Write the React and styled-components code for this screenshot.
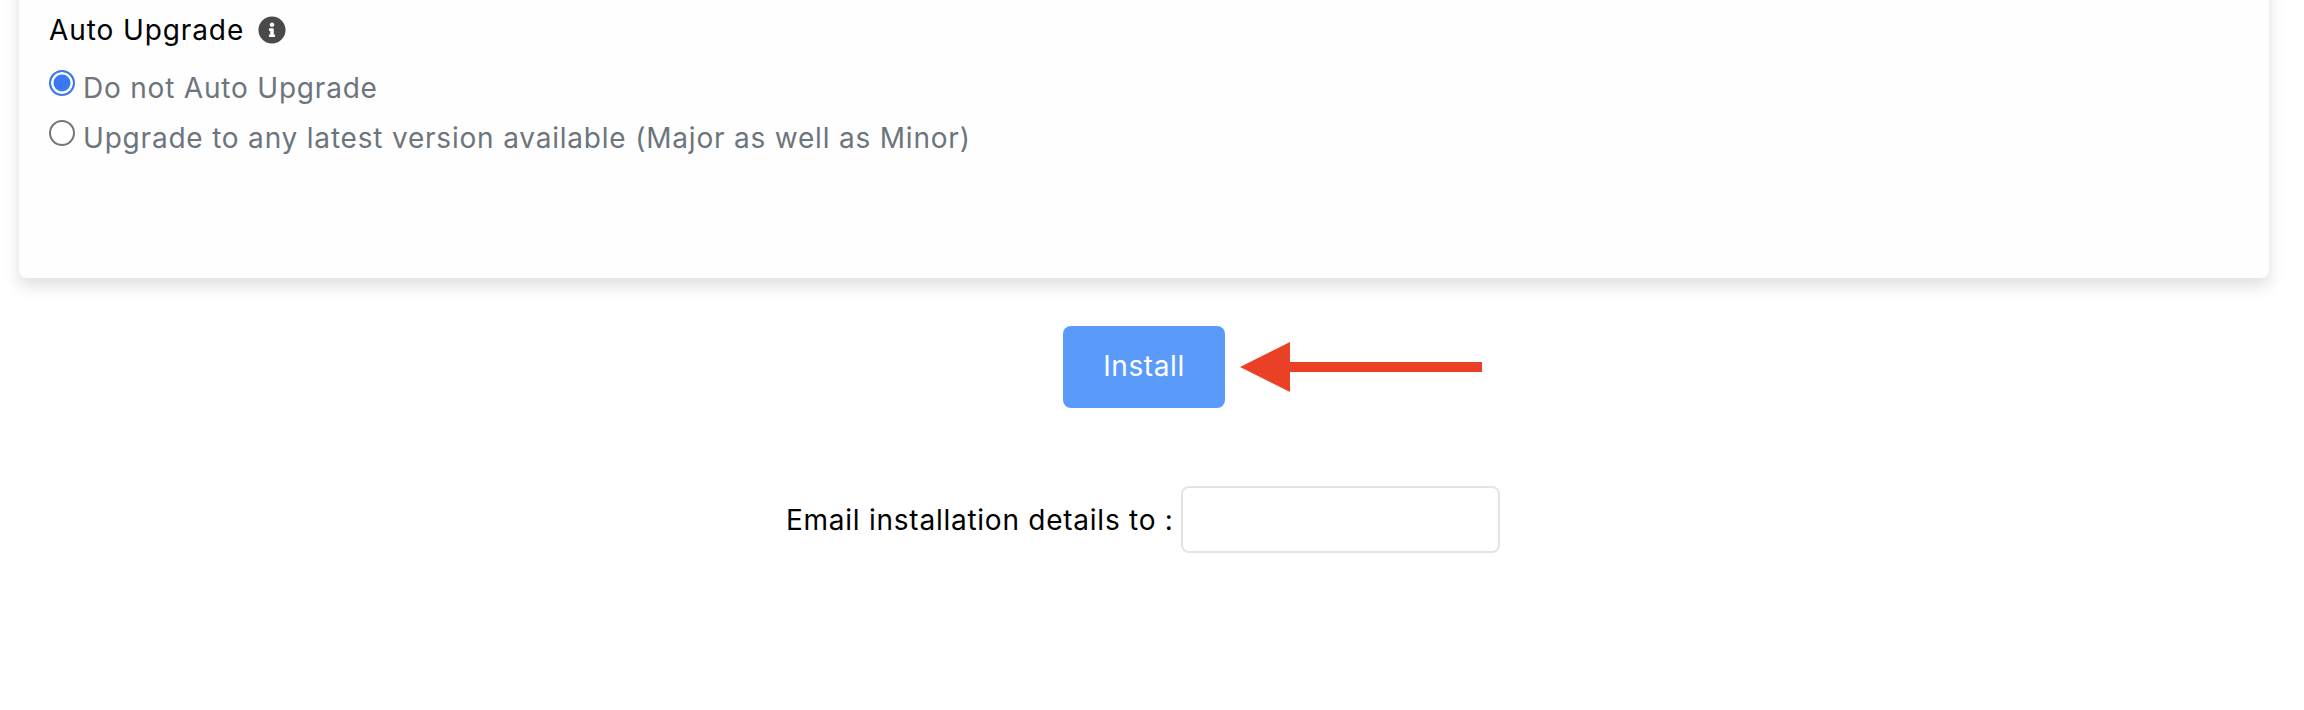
import React from "react";
import styled, { createGlobalStyle } from "styled-components";
import { FaInfoCircle } from "react-icons/fa";

const Global = createGlobalStyle`
  html, body { margin: 0; padding: 0; background: #fff; overflow: hidden; }
  body { font-family: Inter, "Noto Sans", "Liberation Sans", sans-serif; }
`;

const Page = styled.div`
  width: 2304px;
  height: 710px;
  overflow: hidden;
`;

const Card = styled.section`
  box-sizing: border-box;
  width: 2250px;
  height: 298px;
  margin: -20px 0 0 19px;
  padding: 31px 30px 0;
  background: #fefefe;
  border-radius: 8px;
  box-shadow: 0 8px 16px rgba(0, 0, 0, 0.13);
`;

const Heading = styled.div`
  display: flex;
  align-items: center;
  gap: 14px;
  height: 38px;
  font-size: 28px;
  letter-spacing: 0.9px;
  color: #000;
`;

const Info = styled(FaInfoCircle)`
  width: 28px;
  height: 28px;
  color: #4a4a4a;
`;

const Options = styled.div`
  display: flex;
  flex-direction: column;
  margin-top: 14px;
`;

const Option = styled.label`
  display: flex;
  align-items: center;
  gap: 8px;
  height: 50px;
  font-size: 28px;
  letter-spacing: 0.8px;
  color: #6c757d;
`;

const Radio = styled.input.attrs({ type: "radio", name: "upgrade" })`
  appearance: none;
  box-sizing: border-box;
  flex: none;
  width: 26px;
  height: 26px;
  margin: -10px 0 0;
  border-radius: 50%;
  background: #fff;
  border: 2px solid #767676;
  &:checked {
    border-color: #3b78f6;
    background: #3b78f6;
    box-shadow: inset 0 0 0 2.5px #fff;
  }
`;

const Actions = styled.div`
  display: flex;
  align-items: center;
  margin: 48px 0 0 1063px;
  gap: 15px;
`;

const InstallButton = styled.button`
  width: 162px;
  height: 82px;
  padding: 0 0 2px;
  border: none;
  border-radius: 8px;
  background: #5a9afa;
  color: #fff;
  font-family: inherit;
  font-size: 28px;
  letter-spacing: 0.6px;
`;

const Arrow = styled.svg`
  display: block;
  flex: none;
`;

const EmailRow = styled.div`
  display: flex;
  align-items: center;
  gap: 7px;
  margin: 78px 0 0 786px;
`;

const EmailLabel = styled.label`
  font-size: 28px;
  letter-spacing: 0.75px;
  color: #000;
`;

const EmailInput = styled.input`
  box-sizing: border-box;
  width: 319px;
  height: 67px;
  border: 2px solid #e4e4e4;
  border-radius: 8px;
  background: #fff;
`;

export default function App() {
  return (
    <Page>
      <Global />
      <Card>
        <Heading>
          Auto Upgrade
          <Info />
        </Heading>
        <Options>
          <Option>
            <Radio defaultChecked />
            Do not Auto Upgrade
          </Option>
          <Option>
            <Radio />
            Upgrade to any latest version available (Major as well as Minor)
          </Option>
        </Options>
      </Card>
      <Actions>
        <InstallButton>Install</InstallButton>
        <Arrow width="242" height="50" viewBox="0 0 242 50">
          <path d="M0 25 L50 0 V20 H242 V30 H50 V50 Z" fill="#ea4126" />
        </Arrow>
      </Actions>
      <EmailRow>
        <EmailLabel>Email installation details to :</EmailLabel>
        <EmailInput />
      </EmailRow>
    </Page>
  );
}
